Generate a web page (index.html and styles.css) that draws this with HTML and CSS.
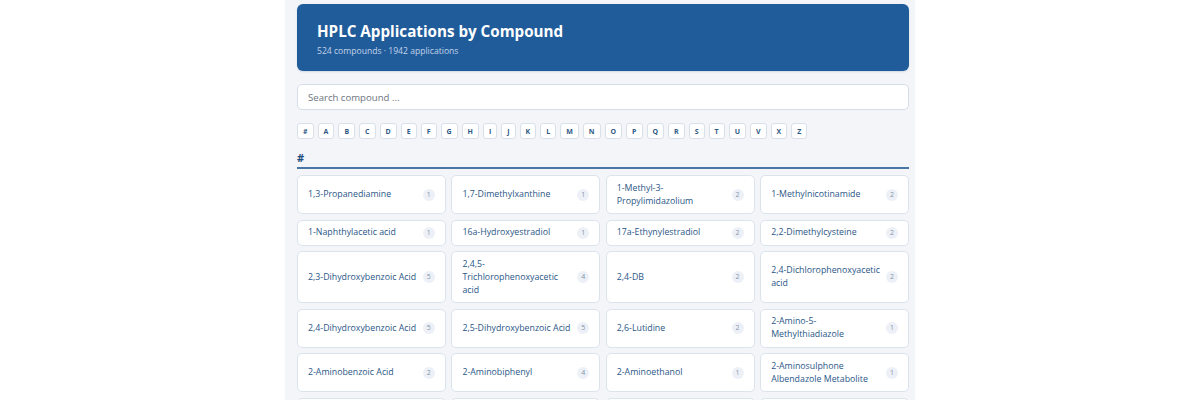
FILE: index.html
```html
<!DOCTYPE html>
<html lang="en">
<head>
<meta charset="utf-8">
<title>HPLC Applications by Compound</title>
<link rel="stylesheet" href="styles.css">
</head>
<body>
<div class="page">
  <header class="hero">
    <h1 class="hero-title">HPLC Applications by Compound</h1>
    <p class="hero-sub">524 compounds · 1942 applications</p>
  </header>
  <input class="search" type="text" placeholder="Search compound ...">
  <nav class="letters">
    <a class="letter">#</a><a class="letter">A</a><a class="letter">B</a><a class="letter">C</a><a class="letter">D</a><a class="letter">E</a><a class="letter">F</a><a class="letter">G</a><a class="letter">H</a><a class="letter">I</a><a class="letter">J</a><a class="letter">K</a><a class="letter">L</a><a class="letter">M</a><a class="letter">N</a><a class="letter">O</a><a class="letter">P</a><a class="letter">Q</a><a class="letter">R</a><a class="letter">S</a><a class="letter">T</a><a class="letter">U</a><a class="letter">V</a><a class="letter">X</a><a class="letter">Z</a>
  </nav>
  <h2 class="section">#</h2>
  <div class="grid">
    <a class="card"><span class="name">1,3-Propanediamine</span><span class="badge">1</span></a>
    <a class="card"><span class="name">1,7-Dimethylxanthine</span><span class="badge">1</span></a>
    <a class="card"><span class="name">1-Methyl-3-Propylimidazolium</span><span class="badge">2</span></a>
    <a class="card"><span class="name">1-Methylnicotinamide</span><span class="badge">2</span></a>
    <a class="card"><span class="name">1-Naphthylacetic acid</span><span class="badge">1</span></a>
    <a class="card"><span class="name">16a-Hydroxyestradiol</span><span class="badge">1</span></a>
    <a class="card"><span class="name">17a-Ethynylestradiol</span><span class="badge">2</span></a>
    <a class="card"><span class="name">2,2-Dimethylcysteine</span><span class="badge">2</span></a>
    <a class="card"><span class="name">2,3-Dihydroxybenzoic Acid</span><span class="badge">5</span></a>
    <a class="card"><span class="name">2,4,5-Trichlorophenoxyacetic acid</span><span class="badge">4</span></a>
    <a class="card"><span class="name">2,4-DB</span><span class="badge">2</span></a>
    <a class="card"><span class="name">2,4-Dichlorophenoxyacetic acid</span><span class="badge">2</span></a>
    <a class="card"><span class="name">2,4-Dihydroxybenzoic Acid</span><span class="badge">5</span></a>
    <a class="card"><span class="name">2,5-Dihydroxybenzoic Acid</span><span class="badge">5</span></a>
    <a class="card"><span class="name">2,6-Lutidine</span><span class="badge">2</span></a>
    <a class="card"><span class="name">2-Amino-5-Methylthiadiazole</span><span class="badge">1</span></a>
    <a class="card"><span class="name">2-Aminobenzoic Acid</span><span class="badge">2</span></a>
    <a class="card"><span class="name">2-Aminobiphenyl</span><span class="badge">4</span></a>
    <a class="card"><span class="name">2-Aminoethanol</span><span class="badge">1</span></a>
    <a class="card"><span class="name">2-Aminosulphone Albendazole Metabolite</span><span class="badge">1</span></a>
    <a class="card"><span class="name">2-Aminothiazole</span><span class="badge">1</span></a>
    <a class="card"><span class="name">2-Chlorophenol</span><span class="badge">3</span></a>
    <a class="card"><span class="name">2-Ethylhexanoic Acid</span><span class="badge">1</span></a>
    <a class="card"><span class="name">2-Hydroxybenzoic Acid</span><span class="badge">2</span></a>
  </div>
</div>
</body>
</html>
```

FILE: styles.css
```css
html, body {
  margin: 0;
  padding: 0;
  background: #ffffff;
}
body {
  font-family: "Open Sans", "Noto Sans", "Liberation Sans", sans-serif;
  color: #2b5787;
}
.page {
  width: 612px;
  margin-left: calc(50% - 315px);
  padding: 4px 6px 20px 12px;
  background: #f3f5f9;
  min-height: 400px;
}
.hero {
  background: #215c9a;
  border-radius: 6px;
  padding: 17px 20px 14px;
  height: 36px;
  box-shadow: 0 1px 2px rgba(30, 60, 100, 0.15);
}
.hero-title {
  margin: 0;
  font-size: 15.2px;
  line-height: 20px;
  font-weight: 700;
  color: #ffffff;
}
.hero-sub {
  margin: 4px 0 0;
  font-size: 8.6px;
  line-height: 12px;
  color: #c2d4ea;
}
.search {
  display: block;
  box-sizing: border-box;
  width: 100%;
  height: 26px;
  margin: 13px 0 0;
  padding: 0 10px;
  border: 1px solid #d6dee9;
  border-radius: 5px;
  background: #ffffff;
  font-family: inherit;
  font-size: 9.6px;
  color: #333;
  outline: none;
}
.search::placeholder {
  color: #6d7580;
}
.letters {
  display: flex;
  flex-wrap: wrap;
  gap: 4px;
  margin-top: 13px;
}
.letter {
  box-sizing: border-box;
  height: 16px;
  min-width: 14px;
  padding: 0 5px;
  display: flex;
  align-items: center;
  justify-content: center;
  background: #ffffff;
  border: 1px solid #d8e0ea;
  border-radius: 3px;
  font-size: 7px;
  font-weight: 700;
  color: #2f5a86;
}
.section {
  margin: 12px 0 0;
  padding-bottom: 3px;
  border-bottom: 2px solid #4a76a6;
  font-size: 11px;
  line-height: 13px;
  font-weight: 700;
  color: #1f4e7f;
}
.grid {
  display: grid;
  grid-template-columns: repeat(4, 1fr);
  gap: 5.5px;
  margin-top: 6px;
}
.card {
  display: flex;
  align-items: center;
  gap: 4px;
  padding: 5.5px 10px;
  background: #ffffff;
  border: 1px solid #dbe3ed;
  border-radius: 5px;
  min-height: 13px;
}
.name {
  flex: 1;
  font-size: 8.8px;
  line-height: 13px;
  color: #2b5787;
}
.badge {
  flex: none;
  width: 12px;
  height: 12px;
  border-radius: 50%;
  background: #edf1f7;
  color: #8393a8;
  font-size: 7px;
  line-height: 12px;
  text-align: center;
}
```
